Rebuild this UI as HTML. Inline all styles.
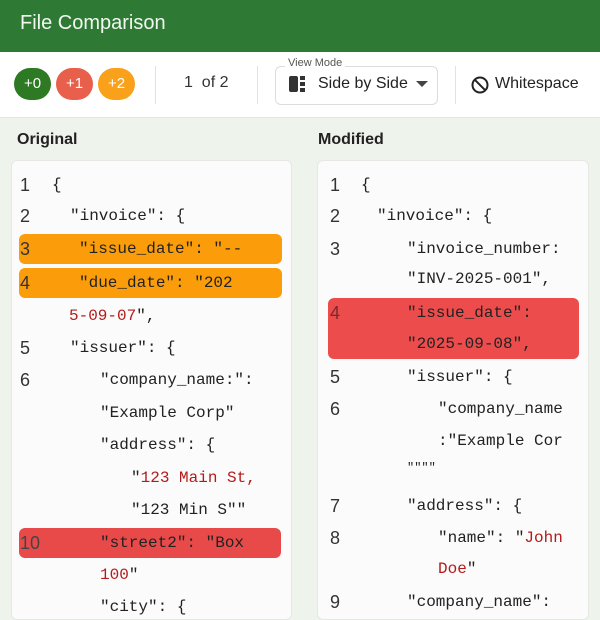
<!DOCTYPE html>
<html><head><style>
*{margin:0;padding:0;box-sizing:border-box}
body{width:600px;height:600px;overflow:hidden;background:#eef3ec;font-family:"Liberation Sans",sans-serif;position:relative}
.a{position:absolute;white-space:pre}
.hdr{position:absolute;left:0;top:0;width:600px;height:52px;background:#2e7a34;color:#f2f7f0;font-size:20px;padding:12px 0 0 20px}
.tb{position:absolute;left:0;top:52px;width:600px;height:66px;background:#fff;border-bottom:1px solid #e2e6e0}
.bd{position:absolute;top:68px;width:37px;height:32px;border-radius:16px;color:#fff;font-size:15px;text-align:center;line-height:32px}
.dv{position:absolute;top:66px;width:1px;height:38px;background:#e2e2e2}
.pn{position:absolute;top:160px;height:460px;background:#fbfbfb;border:1px solid #e6e8e4;border-radius:6px}
.c{position:absolute;font-family:"Liberation Mono",monospace;font-size:16px;color:#222;white-space:pre;line-height:20px}
.n{position:absolute;font-family:"Liberation Sans",sans-serif;font-size:18px;color:#333;line-height:20px}
.r{color:#b31b1b}
.hl{position:absolute;border-radius:6px}
</style></head><body>
<div class="hdr">File Comparison</div>
<div class="tb"></div>
<div class="bd" style="left:14px;background:#2e7a24">+0</div>
<div class="bd" style="left:56px;background:#e8604c">+1</div>
<div class="bd" style="left:98px;background:#f9a11b">+2</div>
<div class="dv" style="left:155px"></div>
<div class="a" style="left:184px;top:74px;font-size:16px;color:#333">1 &nbsp;of 2</div>
<div class="dv" style="left:257px"></div>
<div style="position:absolute;left:275px;top:66px;width:163px;height:39px;border:1px solid #dcdcdc;border-radius:6px"></div>
<div class="a" style="left:285px;top:57px;font-size:11px;color:#555;background:#fff;padding:0 3px">View Mode</div>
<div style="position:absolute;left:289px;top:76px;width:9px;height:16px;background:#333;border-radius:2px"></div>
<div style="position:absolute;left:300px;top:76px;width:5px;height:4px;background:#333"></div>
<div style="position:absolute;left:300px;top:82px;width:5px;height:4px;background:#333"></div>
<div style="position:absolute;left:300px;top:88px;width:5px;height:4px;background:#333"></div>
<div class="a" style="left:318px;top:75px;font-size:16px;color:#222">Side by Side</div>
<div style="position:absolute;left:416px;top:81px;border-left:6px solid transparent;border-right:6px solid transparent;border-top:6px solid #444"></div>
<div class="dv" style="left:455px"></div>
<svg style="position:absolute;left:470px;top:75px" width="20" height="20" viewBox="0 0 20 20"><circle cx="10" cy="10" r="7.5" fill="none" stroke="#222" stroke-width="2"/><line x1="4.7" y1="4.7" x2="15.3" y2="15.3" stroke="#222" stroke-width="2"/></svg>
<div class="a" style="left:495px;top:75px;font-size:16px;color:#222">Whitespace</div>
<div class="a" style="left:17px;top:131px;font-size:16px;font-weight:bold;color:#222">Original</div>
<div class="a" style="left:318px;top:131px;font-size:16px;font-weight:bold;color:#222">Modified</div>
<div class="pn" style="left:11px;width:281px"></div>
<div class="pn" style="left:317px;width:272px"></div>
<div class="hl" style="left:19px;top:234px;width:263px;height:30px;background:#fb9d0b"></div>
<div class="hl" style="left:19px;top:268px;width:263px;height:30px;background:#fb9d0b"></div>
<div class="hl" style="left:19px;top:528px;width:262px;height:30px;background:#e84a4a"></div>
<div class="hl" style="left:328px;top:298px;width:251px;height:61px;background:#ec4c4c"></div>

<div class="n" style="left:20px;top:175px">1</div><div class="c" style="left:52px;top:175px">{</div>
<div class="n" style="left:20px;top:206px">2</div><div class="c" style="left:70px;top:206px">"invoice": {</div>
<div class="n" style="left:20px;top:239px">3</div><div class="c" style="left:79px;top:239px">"issue_date": "--</div>
<div class="n" style="left:20px;top:273px">4</div><div class="c" style="left:79px;top:273px">"due_date": "202</div>
<div class="c" style="left:69px;top:306px"><span class="r">5-09-07</span>",</div>
<div class="n" style="left:20px;top:338px">5</div><div class="c" style="left:70px;top:338px">"issuer": {</div>
<div class="n" style="left:20px;top:370px">6</div><div class="c" style="left:100px;top:370px">"company_name:":</div>
<div class="c" style="left:100px;top:403px">"Example Corp"</div>
<div class="c" style="left:100px;top:435px">"address": {</div>
<div class="c" style="left:131px;top:468px">"<span class="r">123 Main St,</span></div>
<div class="c" style="left:131px;top:500px">"123 Min S""</div>
<div class="n" style="left:20px;top:533px;color:#444">10</div><div class="c" style="left:100px;top:533px">"street2": "Box</div>
<div class="c" style="left:100px;top:565px"><span class="r">100</span>"</div>
<div class="c" style="left:100px;top:597px">"city": {</div>

<div class="n" style="left:330px;top:175px">1</div><div class="c" style="left:361px;top:175px">{</div>
<div class="n" style="left:330px;top:206px">2</div><div class="c" style="left:377px;top:206px">"invoice": {</div>
<div class="n" style="left:330px;top:239px">3</div><div class="c" style="left:407px;top:239px">"invoice_number:</div>
<div class="c" style="left:407px;top:269px">"INV-2025-001",</div>
<div class="n" style="left:330px;top:303px;color:#7a2a2a">4</div><div class="c" style="left:407px;top:303px">"issue_date":</div>
<div class="c" style="left:407px;top:334px">"2025-09-08",</div>
<div class="n" style="left:330px;top:367px">5</div><div class="c" style="left:407px;top:367px">"issuer": {</div>
<div class="n" style="left:330px;top:399px">6</div><div class="c" style="left:438px;top:399px">"company_name</div>
<div class="c" style="left:438px;top:431px">:"Example Cor</div>
<div class="c" style="left:407px;top:458px;font-size:12px">""""</div>
<div class="n" style="left:330px;top:496px">7</div><div class="c" style="left:407px;top:496px">"address": {</div>
<div class="n" style="left:330px;top:528px">8</div><div class="c" style="left:438px;top:528px">"name": "<span class="r">John</span></div>
<div class="c" style="left:438px;top:559px"><span class="r">Doe</span>"</div>
<div class="n" style="left:330px;top:592px">9</div><div class="c" style="left:407px;top:592px">"company_name":</div>
</body></html>
